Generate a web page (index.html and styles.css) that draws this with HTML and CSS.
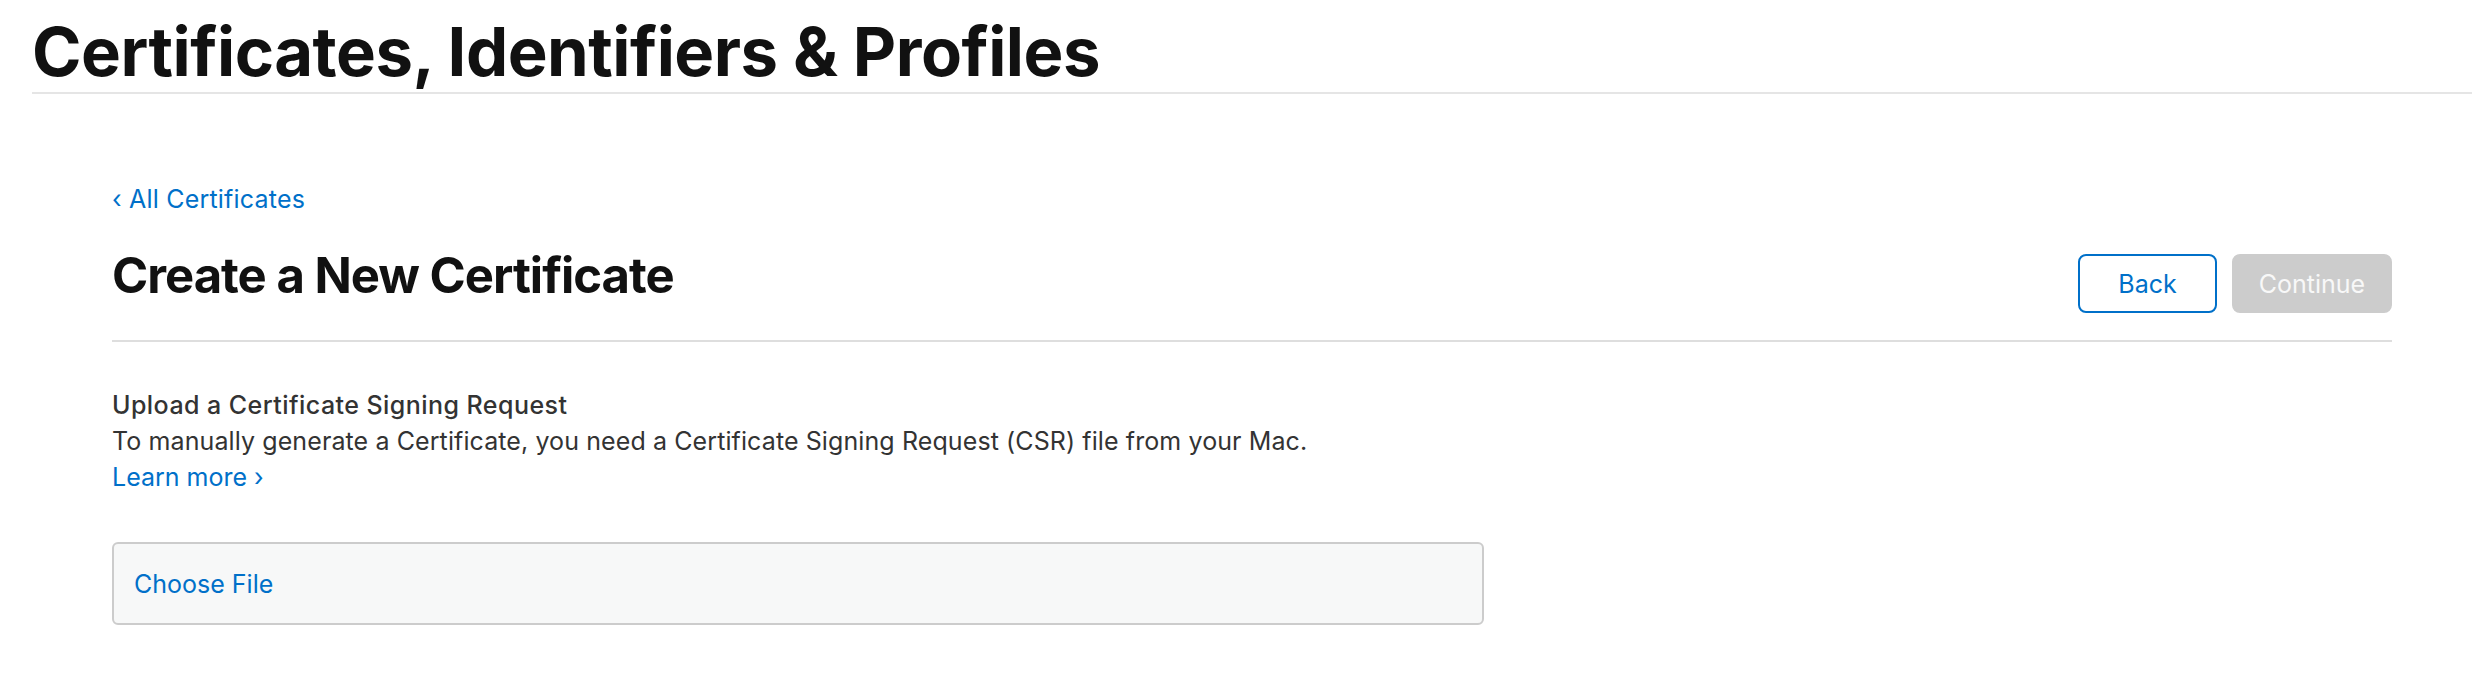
FILE: index.html
```html
<!DOCTYPE html>
<html lang="en">
<head>
<meta charset="utf-8">
<title>Certificates, Identifiers &amp; Profiles</title>
<link rel="stylesheet" href="styles.css">
</head>
<body>
<div class="page">
  <header class="site-header">
    <h1 class="site-title">Certificates, Identifiers &amp; Profiles</h1>
  </header>
  <main class="content">
    <a class="back-link" href="#">&#8249; All Certificates</a>
    <div class="title-row">
      <h2 class="page-title">Create a New Certificate</h2>
      <div class="actions">
        <button class="btn btn-outline" type="button">Back</button>
        <button class="btn btn-disabled" type="button" disabled>Continue</button>
      </div>
    </div>
    <section class="upload">
      <p class="upload-label">Upload a Certificate Signing Request</p>
      <p class="upload-text">To manually generate a Certificate, you need a Certificate Signing Request (CSR) file from your Mac.</p>
      <a class="learn-more" href="#">Learn more &#8250;</a>
      <label class="file-box">
        <span class="file-choose">Choose File</span>
      </label>
    </section>
  </main>
</div>
</body>
</html>
```
FILE: styles.css
```css
* { box-sizing: border-box; }

html, body {
  margin: 0;
  padding: 0;
  background: #ffffff;
}

body {
  font-family: Inter, "Liberation Sans", Arial, sans-serif;
  color: #333333;
}

.page {
  padding: 0 20px 0 32px;
}

.site-header {
  padding-top: 12px;
  border-bottom: 2px solid #e5e5e5;
}

.site-title {
  margin: 0;
  font-size: 67px;
  line-height: 80px;
  font-weight: 700;
  letter-spacing: -0.5px;
  color: #111111;
}

.content {
  padding: 0 80px;
}

.back-link {
  display: block;
  margin-top: 87px;
  font-size: 25px;
  line-height: 36px;
  letter-spacing: 0.2px;
  color: #0070c9;
  text-decoration: none;
}

.title-row {
  display: flex;
  justify-content: space-between;
  align-items: flex-start;
  margin-top: 37px;
  padding-bottom: 27px;
  border-bottom: 2px solid #dedede;
}

.page-title {
  margin: 0;
  font-size: 49px;
  line-height: 43px;
  font-weight: 700;
  letter-spacing: -1px;
  color: #111111;
}

.actions {
  display: flex;
  gap: 15px;
}

.btn {
  height: 59px;
  border-radius: 8px;
  font-family: inherit;
  font-size: 25px;
  font-weight: 400;
  padding: 0;
  text-align: center;
}

.btn-outline {
  width: 139px;
  border: 2px solid #0070c9;
  background: #ffffff;
  color: #0070c9;
}

.btn-disabled {
  width: 160px;
  border: 2px solid #cccccc;
  background: #cccccc;
  color: #f8f8f8;
}

.upload {
  padding-top: 45px;
}

.upload-label {
  margin: 0;
  font-size: 25px;
  line-height: 36px;
  font-weight: 500;
  letter-spacing: 0.45px;
  color: #333333;
}

.upload-text {
  margin: 0;
  font-size: 25px;
  line-height: 36px;
  letter-spacing: 0.1px;
  color: #333333;
}

.learn-more {
  display: block;
  font-size: 25px;
  line-height: 36px;
  color: #0070c9;
  text-decoration: none;
}

.file-box {
  display: flex;
  align-items: center;
  width: 1372px;
  height: 83px;
  margin-top: 47px;
  padding-left: 20px;
  background: #f7f8f8;
  border: 2px solid #cccccc;
  border-radius: 6px;
}

.file-choose {
  font-size: 25px;
  color: #0070c9;
}
```
